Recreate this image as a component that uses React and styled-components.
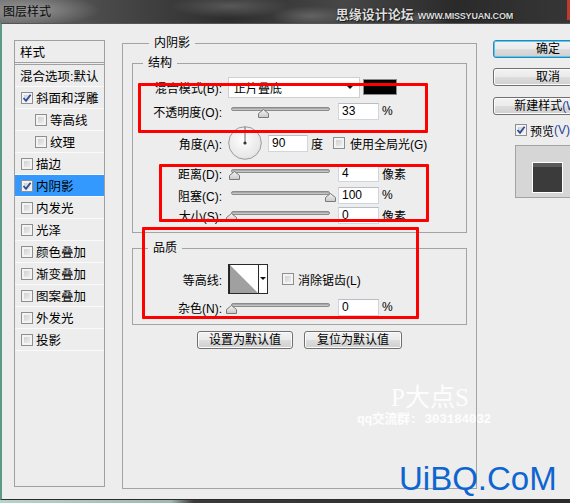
import React from 'react';
import styled, { createGlobalStyle } from 'styled-components';

const Global = createGlobalStyle`
  html, body { margin: 0; padding: 0; background: #3a3a3a; }
  body {
    font-family: "Liberation Sans", "Noto Sans CJK SC", sans-serif;
    font-size: 12px;
    color: #000;
  }
`;

const Window = styled.div`
  position: relative;
  width: 570px;
  height: 503px;
  overflow: hidden;
  display: flex;
  flex-direction: column;
  background: #3a3a3a;
`;

const TitleBar = styled.div`
  height: 23px;
  flex: none;
  display: flex;
  align-items: center;
  background:
    radial-gradient(ellipse 70px 16px at 30px 10px, rgba(190,190,190,.55), transparent),
    radial-gradient(ellipse 60px 12px at 230px 6px, rgba(130,130,130,.5), transparent),
    radial-gradient(ellipse 40px 10px at 310px 16px, rgba(140,140,140,.45), transparent),
    radial-gradient(ellipse 30px 8px at 420px 18px, rgba(140,140,140,.4), transparent),
    linear-gradient(90deg, #6e6e6e 0%, #4a4a4a 18%, #2e2e2e 40%, #474747 60%, #2a2a2a 80%, #363636 100%);
`;

const Title = styled.span`
  margin-left: 3px;
  font-size: 12px;
  line-height: 14px;
  color: #0a0a0a;
`;

const SiteMark = styled.div`
  margin-left: auto;
  margin-right: 54px;
  display: flex;
  align-items: baseline;
  gap: 4px;
  color: #dedede;
  text-shadow: 0 0 1px #000, 1px 1px 0 #222;
  margin-top: 6px;
`;

const SiteName = styled.span`
  font-size: 13px;
  font-weight: bold;
  line-height: 14px;
`;

const SiteUrl = styled.span`
  font-size: 9px;
  font-weight: bold;
  letter-spacing: -0.2px;
`;

const CloseEdge = styled.div`
  width: 3px;
  height: 20px;
  align-self: flex-start;
  background: #c23a2a;
`;

const Body = styled.div`
  flex: none;
  height: 477px;
  box-sizing: border-box;
  display: flex;
  align-items: flex-start;
  background: #ededed;
  border-top: 1px solid #555;
  border-left: 2px solid #5c9a86;
  border-bottom: 1px solid #2c2c2c;
`;

const BottomStrip = styled.div`
  flex: none;
  height: 3px;
  background: linear-gradient(90deg, #b9d3cb 0%, #9fb8b0 30%, #3a3a3a 34%, #2a2a2a 100%);
`;

/* ---------- left list ---------- */

const StyleList = styled.div`
  margin: 16px 0 0 12px;
  width: 91px;
  height: 447px;
  box-sizing: border-box;
  border: 1px solid #a0a0a0;
  flex: none;
`;

const ListHeader = styled.div`
  height: 21px;
  border-bottom: 3px double #a0a0a0;
  display: flex;
  align-items: center;
  padding-left: 5px;
  font-size: 12.5px;
`;

const ListItem = styled.div`
  height: 21px;
  border-bottom: 1px solid #fafafa;
  display: flex;
  align-items: center;
  padding-left: ${p => p.$indent}px;
  font-size: 12.5px;
  white-space: nowrap;
  background: ${p => (p.$active ? '#3399ff' : 'transparent')};
`;

const Box = styled.span`
  flex: none;
  width: 12px;
  height: 12px;
  box-sizing: border-box;
  border: 1px solid #8e8f8f;
  background: linear-gradient(135deg, #c9c9c9, #f5f5f5);
  box-shadow: inset 0 0 0 2px #f3f3f3;
  margin-right: ${p => p.$gap ?? 3}px;
  margin-left: ${p => p.$ml ?? 0}px;
  display: flex;
  align-items: center;
  justify-content: center;
`;

const Checkbox = ({ checked, gap, ml }) => (
  <Box $gap={gap} $ml={ml}>
    {checked && (
      <svg width="10" height="10" viewBox="0 0 10 10">
        <path d="M1.5 5 L4 7.8 L8.6 1.8" fill="none" stroke="#2b4a9c" strokeWidth="1.8" />
      </svg>
    )}
  </Box>
);

const listItems = [
  { t: '斜面和浮雕', c: true, i: 6 },
  { t: '等高线', c: false, i: 20 },
  { t: '纹理', c: false, i: 20 },
  { t: '描边', c: false, i: 6 },
  { t: '内阴影', c: true, i: 6, a: true },
  { t: '内发光', c: false, i: 6 },
  { t: '光泽', c: false, i: 6 },
  { t: '颜色叠加', c: false, i: 6 },
  { t: '渐变叠加', c: false, i: 6 },
  { t: '图案叠加', c: false, i: 6 },
  { t: '外发光', c: false, i: 6 },
  { t: '投影', c: false, i: 6 },
];

/* ---------- group boxes ---------- */

const Group = styled.fieldset`
  margin: ${p => p.$mt || 0}px 0 0 ${p => p.$ml || 0}px;
  padding: ${p => p.$pad};
  border: 1px solid #a3a3a3;
  min-width: 0;
  box-sizing: border-box;
  width: ${p => p.$w || 'auto'};
  height: ${p => p.$h || 'auto'};
  flex: none;
`;

const Legend = styled.legend`
  margin-left: ${p => p.$ml}px;
  padding: 0 5px;
  font-size: 12px;
  line-height: 16px;
`;

const Row = styled.div`
  display: flex;
  align-items: center;
  height: ${p => p.$h}px;
  margin-top: ${p => p.$mt || 0}px;
  white-space: nowrap;
`;

const Label = styled.span`
  width: 89px;
  margin-right: 6px;
  text-align: right;
  flex: none;
`;

const Select = styled.div`
  width: 132px;
  height: 21px;
  box-sizing: border-box;
  border: 1px solid #cfcfcf;
  background: #fff;
  display: flex;
  align-items: center;
  padding: 0 5px 0 5px;
  &::after {
    content: '';
    margin-left: auto;
    border-left: 4px solid transparent;
    border-right: 4px solid transparent;
    border-top: 4px solid #111;
  }
`;

const Swatch = styled.div`
  width: 34px;
  height: 16px;
  box-sizing: border-box;
  margin-left: 3px;
  background: #000;
  border: 1px solid #8a8a8a;
`;

const SliderWrap = styled.div`
  position: relative;
  width: 99px;
  height: 20px;
  margin: 0 8px 0 3px;
  flex: none;
`;

const Track = styled.div`
  position: absolute;
  left: 0;
  right: 0;
  top: 6px;
  height: 4px;
  box-sizing: border-box;
  border-radius: 3px;
  border: 1px solid #8c8c8c;
  background: linear-gradient(#9a9a9a, #d2d2d2);
`;

const Thumb = styled.svg`
  position: absolute;
  top: 8px;
  margin-left: -5.5px;
`;

const Slider = ({ pct }) => (
  <SliderWrap>
    <Track />
    <Thumb width="11" height="9" viewBox="0 0 11 9" style={{ left: `${pct}%` }}>
      <defs>
        <linearGradient id="tg" x1="0" y1="0" x2="0" y2="1">
          <stop offset="0" stopColor="#f4f4f4" />
          <stop offset="1" stopColor="#c8c8c8" />
        </linearGradient>
      </defs>
      <polygon points="0.5,8.5 0.5,4.5 5.5,0.5 10.5,4.5 10.5,8.5" fill="url(#tg)" stroke="#7a7a7a" />
    </Thumb>
  </SliderWrap>
);

const Field = styled.div`
  width: ${p => p.$w || 41}px;
  height: 17px;
  box-sizing: border-box;
  border: 1px solid #d0d6de;
  border-top-color: #b9bec6;
  background: #fff;
  padding-left: 3px;
  line-height: 15px;
  margin-left: ${p => p.$ml || 0}px;
  flex: none;
`;

const Unit = styled.span`
  margin-left: 3px;
`;

const Dial = () => (
  <svg width="34" height="34" viewBox="0 0 34 34">
    <defs>
      <radialGradient id="dg" cx="0.45" cy="0.4" r="0.6">
        <stop offset="0" stopColor="#ffffff" />
        <stop offset="1" stopColor="#e4e4e4" />
      </radialGradient>
    </defs>
    <circle cx="17" cy="17" r="16.3" fill="url(#dg)" stroke="#9a9a9a" />
    <line x1="17" y1="17" x2="17" y2="1" stroke="#666" strokeWidth="1" />
    <circle cx="17" cy="17" r="1.6" fill="#333" />
  </svg>
);

const Contour = styled.div`
  width: 40px;
  height: 30px;
  box-sizing: border-box;
  border: 1px solid #2a2a2a;
  display: flex;
  background: #fff;
  flex: none;
`;

const ContourArrow = styled.div`
  flex: 1;
  border-left: 1px solid #2a2a2a;
  display: flex;
  align-items: center;
  justify-content: center;
  &::after {
    content: '';
    border-left: 3px solid transparent;
    border-right: 3px solid transparent;
    border-top: 3px solid #111;
    margin-top: -2px;
  }
`;

const Buttons = styled.div`
  display: flex;
  justify-content: center;
  gap: 11px;
  margin-top: 6px;
`;

const Button = styled.div`
  width: ${p => p.$w}px;
  height: 18px;
  box-sizing: border-box;
  flex: none;
  border: 1px solid ${p => (p.$focus ? '#3c7fb1' : '#707070')};
  border-radius: 3px;
  background: linear-gradient(#f2f2f2 0%, #ebebeb 48%, #dddddd 52%, #cfcfcf 100%);
  box-shadow: inset 0 0 0 1px ${p => (p.$focus ? '#48d0f8' : '#fcfcfc')};
  display: flex;
  align-items: center;
  justify-content: center;
  font-size: 12px;
  line-height: 14px;
  margin-top: ${p => p.$mt || 0}px;
  white-space: nowrap;
  overflow: hidden;
`;

const Hot = styled.span`
  color: #1f3f96;
`;

/* ---------- right column ---------- */

const Side = styled.div`
  margin: 16px 0 0 16px;
  display: flex;
  flex-direction: column;
  flex: none;
`;

const PreviewRow = styled.div`
  display: flex;
  align-items: center;
  height: 16px;
  margin: 7px 0 0 22px;
  white-space: nowrap;
`;

const PreviewBox = styled.div`
  margin: 7px 0 0 22px;
  width: 80px;
  height: 53px;
  box-sizing: border-box;
  border: 1px solid #a3a3a3;
  background: #d6d6d6;
  padding: 16px;
`;

const PreviewSquare = styled.div`
  width: 31px;
  height: 31px;
  box-sizing: border-box;
  border: 1px solid #fff;
  background: linear-gradient(#5a5a5a 0, #5a5a5a 4px, #3b3b3b 4px);
`;

/* ---------- overlays ---------- */

const RedBox = styled.div`
  position: absolute;
  box-sizing: border-box;
  border: 3px solid #ff0000;
  border-radius: 1px;
  pointer-events: none;
`;

const Mark = styled.div`
  position: absolute;
  left: 357px;
  top: 384px;
  color: rgba(255, 255, 255, 0.92);
`;

const MarkBig = styled.div`
  font-family: "Liberation Serif", "Noto Sans CJK SC", serif;
  font-size: 25px;
  line-height: 28px;
  padding-left: 34px;
`;

const MarkSmall = styled.div`
  font-family: "Liberation Mono", "Noto Sans CJK SC", monospace;
  font-weight: bold;
  font-size: 13px;
  line-height: 16px;
  letter-spacing: -0.4px;
`;

const Brand = styled.div`
  position: absolute;
  left: 399px;
  top: 462px;
  font-family: "Liberation Sans", sans-serif;
  font-size: 33px;
  line-height: 1;
  color: #0d66d0;
`;

const redBoxes = [
  { l: 138, t: 83, w: 290, h: 50 },
  { l: 159, t: 164, w: 270, h: 58 },
  { l: 142, t: 227, w: 277, h: 92 },
];

export default function App() {
  return (
    <Window>
      <Global />
      <TitleBar>
        <Title>图层样式</Title>
        <SiteMark>
          <SiteName>思缘设计论坛</SiteName>
          <SiteUrl>WWW.MISSYUAN.COM</SiteUrl>
        </SiteMark>
        <CloseEdge />
      </TitleBar>

      <Body>
        <StyleList>
          <ListHeader>样式</ListHeader>
          <ListItem $indent={5}>混合选项:默认</ListItem>
          {listItems.map(it => (
            <ListItem key={it.t} $indent={it.i} $active={it.a}>
              <Checkbox checked={it.c} />
              {it.t}
            </ListItem>
          ))}
        </StyleList>

        <Group $ml={17} $mt={11} $w="355px" $h="454px" $pad="4px 9px 0 9px">
          <Legend $ml={17}>内阴影</Legend>

          <Group $pad="5px 0 7px 0">
            <Legend $ml={10}>结构</Legend>
            <Row $h={22}>
              <Label>混合模式(B):</Label>
              <Select>正片叠底</Select>
              <Swatch />
            </Row>
            <Row $h={22} $mt={2}>
              <Label>不透明度(O):</Label>
              <Slider pct={33} />
              <Field>33</Field>
              <Unit>%</Unit>
            </Row>
            <Row $h={34} $mt={4}>
              <Label>角度(A):</Label>
              <Dial />
              <Field $w={40} $ml={6}>90</Field>
              <Unit>度</Unit>
              <Checkbox ml={10} gap={5} />
              使用全局光(G)
            </Row>
            <Row $h={20} $mt={3}>
              <Label>距离(D):</Label>
              <Slider pct={4} />
              <Field>4</Field>
              <Unit>像素</Unit>
            </Row>
            <Row $h={20} $mt={2}>
              <Label>阻塞(C):</Label>
              <Slider pct={100} />
              <Field>100</Field>
              <Unit>%</Unit>
            </Row>
            <Row $h={20}>
              <Label>大小(S):</Label>
              <Slider pct={1} />
              <Field>0</Field>
              <Unit>像素</Unit>
            </Row>
          </Group>

          <Group $mt={7} $pad="8px 0 7px 0">
            <Legend $ml={15}>品质</Legend>
            <Row $h={30}>
              <Label>等高线:</Label>
              <Contour>
                <svg width="29" height="28" viewBox="0 0 29 28">
                  <polygon points="1,0 29,28 1,28" fill="#a0a0a0" />
                  <line x1="0.5" y1="0" x2="0.5" y2="28" stroke="#222" />
                </svg>
                <ContourArrow />
              </Contour>
              <Checkbox ml={14} gap={4} />
              消除锯齿(L)
            </Row>
            <Row $h={20} $mt={3}>
              <Label>杂色(N):</Label>
              <Slider pct={1} />
              <Field>0</Field>
              <Unit>%</Unit>
            </Row>
          </Group>

          <Buttons>
            <Button $w={96}>设置为默认值</Button>
            <Button $w={98}>复位为默认值</Button>
          </Buttons>
        </Group>

        <Side>
          <Button $w={110} $focus>确定</Button>
          <Button $w={110} $mt={10}>取消</Button>
          <Button $w={110} $mt={11}>新建样式<Hot>(W)</Hot></Button>
          <PreviewRow>
            <Checkbox checked />
            预览<Hot>(V)</Hot>
          </PreviewRow>
          <PreviewBox>
            <PreviewSquare />
          </PreviewBox>
        </Side>
      </Body>
      <BottomStrip />

      {redBoxes.map((r, i) => (
        <RedBox key={i} style={{ left: r.l, top: r.t, width: r.w, height: r.h }} />
      ))}

      <Mark>
        <MarkBig>P大点S</MarkBig>
        <MarkSmall>qq交流群: 303184032</MarkSmall>
      </Mark>
      <Brand>UiBQ.CoM</Brand>
    </Window>
  );
}
